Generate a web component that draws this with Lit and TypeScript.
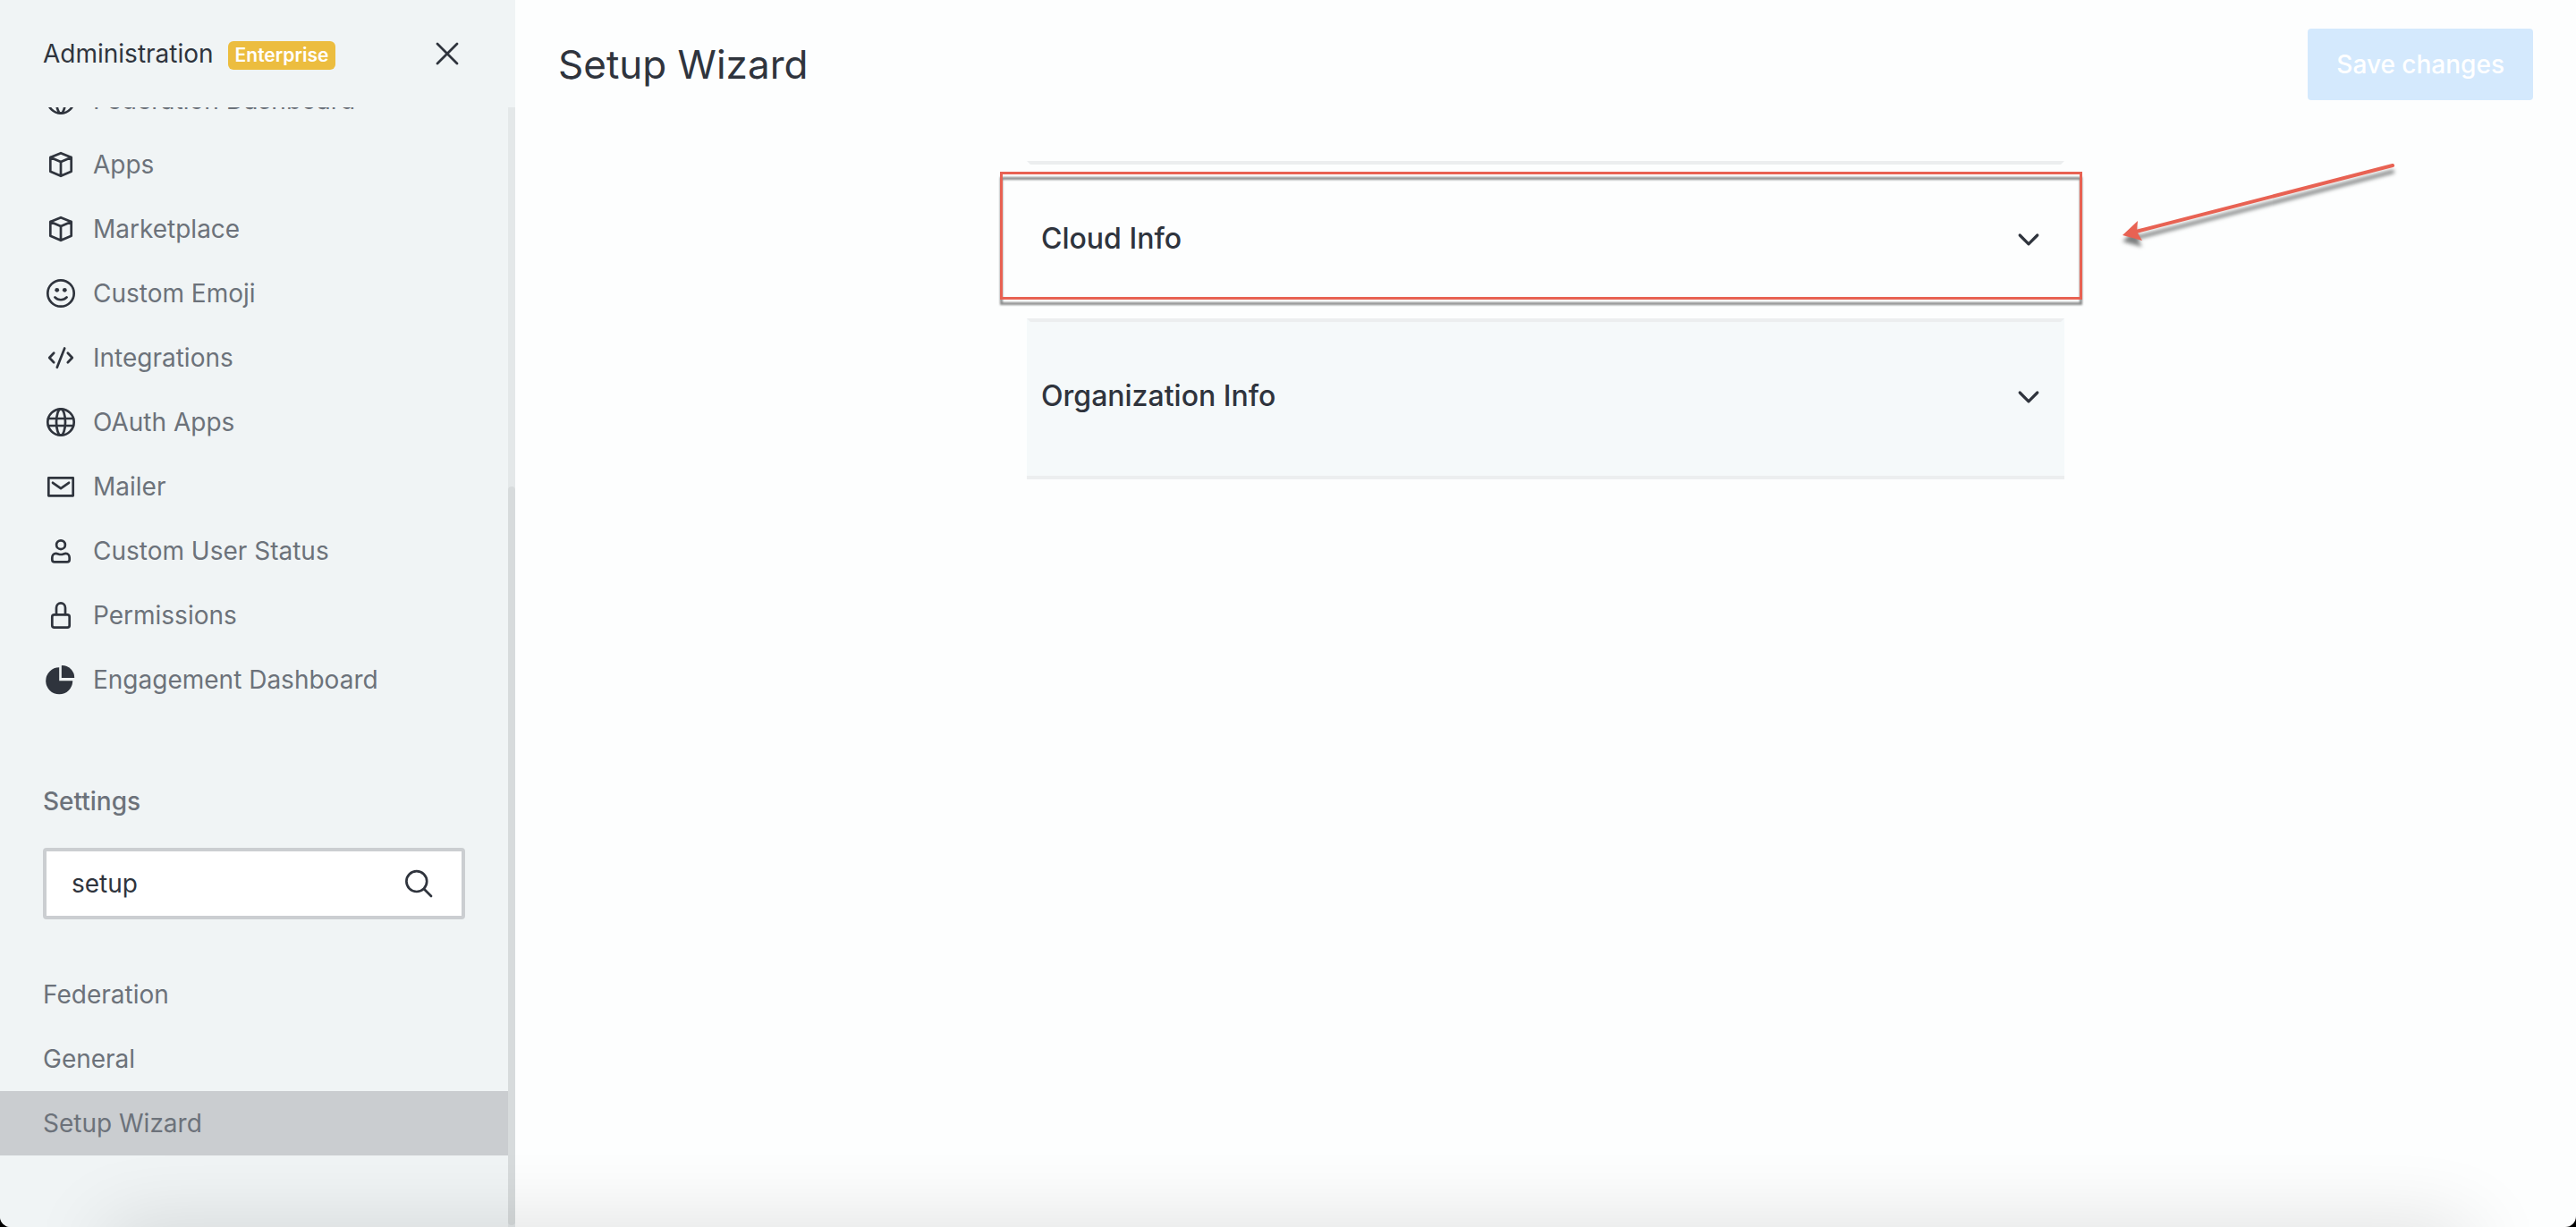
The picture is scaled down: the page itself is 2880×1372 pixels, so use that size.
import { LitElement, html, css, svg, TemplateResult, SVGTemplateResult } from "lit";
import { customElement, property, state } from "lit/decorators.js";
import { classMap } from "lit/directives/class-map.js";

const icons: Record<string, SVGTemplateResult> = {
  globe: svg`<circle cx="20" cy="20" r="14.7"/><ellipse cx="20" cy="20" rx="5" ry="14.7"/><path d="M6 16h28M6 24h28"/>`,
  cube: svg`<path d="M20 7.2 31.7 12v15.8L20 32.8 8.3 27.8V12zM8.3 12 20 17l11.7-5M20 17v15.8"/>`,
  emoji: svg`<circle cx="20" cy="20" r="14.7"/><path d="M13.4 24.4c3.6 3.8 9.6 3.8 13.2 0"/><circle class="solid" cx="15.7" cy="16.3" r="2.4"/><circle class="solid" cx="24.3" cy="16.3" r="2.4"/>`,
  code: svg`<path d="M12.2 14.8 7.2 20l5 5.2M27.8 14.8l5 5.2-5 5.2M24.2 9.4l-8.4 21.4"/>`,
  mail: svg`<path d="M6.3 10.3h27.4v20H6.3zM11 15.8l9 6.4 9-6.4"/>`,
  user: svg`<circle cx="20" cy="13.2" r="4.9"/><path d="M14.5 22.9c2.2 0 3 1.1 5.5 1.1s3.3-1.1 5.5-1.1c2.6 0 4.2 2.2 4.2 4.8v2c0 1.6-1.1 2.7-2.7 2.7H13c-1.6 0-2.7-1.1-2.7-2.7v-2c0-2.6 1.6-4.8 4.2-4.8z"/>`,
  lock: svg`<rect x="10.3" y="19.3" width="19.4" height="14.4" rx="2.4"/><path d="M15 19v-7.2a5 5.4 0 0 1 10 0V19"/>`,
  pie: svg`<path class="solid" d="M18.2 6.3v15h15A15 15 0 1 1 18.2 6.3z"/><path class="solid" d="M21.2 4A14 14 0 0 1 35.2 18H20.8V4.4z"/>`,
  close: svg`<path d="M9 9l22 22M31 9 9 31"/>`,
  search: svg`<circle cx="17.8" cy="17.6" r="11.4"/><path d="M26 26l8 8"/>`,
  chevron: svg`<path stroke-width="3.2" d="M10.2 16 20 25.8l9.8-9.8"/>`,
};

@customElement("ui-icon")
class UiIcon extends LitElement {
  @property() name = "globe";

  static styles = css`
    :host { display: block; flex: none; width: 40px; height: 40px; color: #2f343d; }
    .glyph {
      display: block; width: 100%; height: 100%; fill: none; stroke: currentColor;
      stroke-linecap: round; stroke-linejoin: round;
    }
    .solid { fill: currentColor; stroke: none; }
  `;

  render(): TemplateResult {
    return html`<svg class="glyph" viewBox="0 0 40 40" aria-hidden="true"><g stroke-width="2.7">${icons[this.name]}</g></svg>`;
  }
}

const adminItems = [
  { icon: "globe", label: "Federation Dashboard" },
  { icon: "cube", label: "Apps" },
  { icon: "cube", label: "Marketplace" },
  { icon: "emoji", label: "Custom Emoji" },
  { icon: "code", label: "Integrations" },
  { icon: "globe", label: "OAuth Apps" },
  { icon: "mail", label: "Mailer" },
  { icon: "user", label: "Custom User Status" },
  { icon: "lock", label: "Permissions" },
  { icon: "pie", label: "Engagement Dashboard" },
];

const settingsGroups = ["Federation", "General", "Setup Wizard"];

@customElement("admin-sidebar")
class AdminSidebar extends LitElement {
  @property() active = "Setup Wizard";
  @state() private query = "setup";

  static styles = css`
    :host {
      display: flex; flex-direction: column; flex: none; width: 576px; min-height: 0;
      background: #f0f4f5; color: #6c727a;
    }
    .head {
      display: flex; align-items: center; flex: none; height: 120px;
      padding: 0 56px 0 48px; box-sizing: border-box; color: #2f343d;
    }
    .title { margin: 0; font-size: 28px; line-height: 40px; font-weight: 400; }
    .badge {
      margin: 4px 0 0 16px; padding: 0 8px; border-radius: 6px;
      background: #ecbd3f; color: #fff; font-size: 21px; line-height: 32px; font-weight: 600;
    }
    .close { margin-left: auto; padding: 0; border: 0; background: none; cursor: pointer; }
    .body { display: flex; flex: 1; min-height: 0; }
    .scroller { flex: 1; min-width: 0; overflow: hidden; }
    .list { margin: 0; padding: 0; list-style: none; }
    .scrolled { margin-top: -44px; }
    .link {
      display: flex; align-items: center; gap: 16px; height: 72px; padding: 0 48px;
      color: inherit; text-decoration: none; font-size: 28px; line-height: 40px;
    }
    .active { background: #cacdd0; }
    .section { margin: 80px 48px 32px; font-size: 28px; line-height: 40px; font-weight: 500; }
    .search {
      display: flex; align-items: center; height: 80px; margin: 0 48px 48px; padding: 0 28px;
      box-sizing: border-box; border: 4px solid #cbced1; border-radius: 4px; background: #fff;
    }
    .input {
      flex: 1; min-width: 0; padding: 0; border: 0; outline: 0; background: none;
      color: #2f343d; font: inherit; font-size: 28px; line-height: 40px;
    }
    .track {
      display: flex; flex-direction: column; justify-content: flex-end;
      flex: none; width: 8px; background: #e4e8e9;
    }
    .thumb { height: 66%; margin-bottom: 2px; border-radius: 4px; background: #d7dbdc; }
  `;

  render(): TemplateResult {
    return html`
      <header class="head">
        <h2 class="title">Administration</h2>
        <span class="badge">Enterprise</span>
        <button class="close" type="button" aria-label="Close"><ui-icon name="close"></ui-icon></button>
      </header>
      <div class="body">
        <nav class="scroller">
          <ul class="list scrolled">
            ${adminItems.map(
              (item) => html`<li><a class="link" href="#"><ui-icon name=${item.icon}></ui-icon>${item.label}</a></li>`
            )}
          </ul>
          <h3 class="section">Settings</h3>
          <label class="search">
            <input
              class="input" type="text" aria-label="Search settings" .value=${this.query}
              @input=${(e: Event) => (this.query = (e.target as HTMLInputElement).value)}
            />
            <ui-icon name="search"></ui-icon>
          </label>
          <ul class="list">
            ${settingsGroups.map(
              (name) => html`<li>
                <a class=${classMap({ link: true, active: name === this.active })} href="#">${name}</a>
              </li>`
            )}
          </ul>
        </nav>
        <div class="track"><div class="thumb"></div></div>
      </div>
    `;
  }
}

@customElement("app-root")
class AppRoot extends LitElement {
  static styles = css`
    :host {
      display: flex; position: relative; height: 100vh; overflow: hidden; background: #000;
      font-family: Inter, "Liberation Sans", sans-serif; font-optical-sizing: none; color: #2f343d;
    }
    .window {
      display: flex; position: relative; flex: 1; min-width: 0; overflow: hidden;
      border-radius: 0 0 12px 12px; background: #fdfefe;
    }
    .window::after {
      content: ""; position: absolute; left: 120px; right: 120px; top: 100%; height: 60px;
      box-shadow: 0 4px 90px rgba(0, 0, 0, 0.16); pointer-events: none;
    }
    .main { display: flex; flex-direction: column; flex: 1; min-width: 0; }
    .bar {
      display: flex; align-items: center; justify-content: space-between;
      height: 144px; padding: 0 48px; box-sizing: border-box;
    }
    .heading { margin: 0; font-size: 44px; line-height: 64px; font-weight: 400; }
    .save {
      height: 80px; padding: 0 32px; border: 0; border-radius: 4px; background: #d4e9fd;
      color: #fff; font: inherit; font-size: 28px; line-height: 40px; font-weight: 500;
    }
    .content { padding: 36px 48px; }
    .accordion { width: 100%; max-width: 1160px; margin: 0 auto; border-bottom: 4px solid #eceeef; }
    .section {
      display: flex; align-items: center; justify-content: space-between; position: relative;
      width: 100%; height: 176px; padding: 0 16px 6px 12px; box-sizing: border-box;
      border: 4px solid transparent; border-top-color: #eceeef; border-bottom: 0;
      background: none; color: inherit; font: inherit; font-size: 32px; line-height: 44px; font-weight: 500;
      text-align: left;
    }
    .hovered { background: #f5f9fa; }
    .row { position: relative; }
    .frame {
      position: absolute; inset: 12px -20px 21px -30px; box-sizing: border-box;
      border: 3px solid #e86253; filter: drop-shadow(0 6px 1px rgba(40, 44, 44, 0.55));
      pointer-events: none;
    }
    .arrow {
      position: absolute; left: 100%; top: 0; width: 400px; height: 112px; margin-left: 44px;
      overflow: visible; filter: drop-shadow(0 7px 2px rgba(40, 44, 44, 0.6)); pointer-events: none;
    }
    .shaft { stroke: #e86253; stroke-width: 4; stroke-linecap: round; }
    .tip { fill: #e86253; }
  `;

  render(): TemplateResult {
    return html`
      <div class="window">
        <admin-sidebar></admin-sidebar>
        <main class="main">
          <header class="bar">
            <h1 class="heading">Setup Wizard</h1>
            <button class="save" type="button" disabled>Save changes</button>
          </header>
          <div class="content">
            <div class="accordion">
              <div class="row">
                <button class="section" type="button" aria-expanded="false">
                  Cloud Info<ui-icon name="chevron"></ui-icon>
                </button>
                <div class="frame"></div>
                <svg class="arrow" viewBox="0 0 400 112" aria-hidden="true">
                  <path class="shaft" d="M323 5 36 79" />
                  <path class="tip" d="M21 83 38 67l-1 12 6 10z" />
                </svg>
              </div>
              <button class="section hovered" type="button" aria-expanded="false">
                Organization Info<ui-icon name="chevron"></ui-icon>
              </button>
            </div>
          </div>
        </main>
      </div>
    `;
  }
}
